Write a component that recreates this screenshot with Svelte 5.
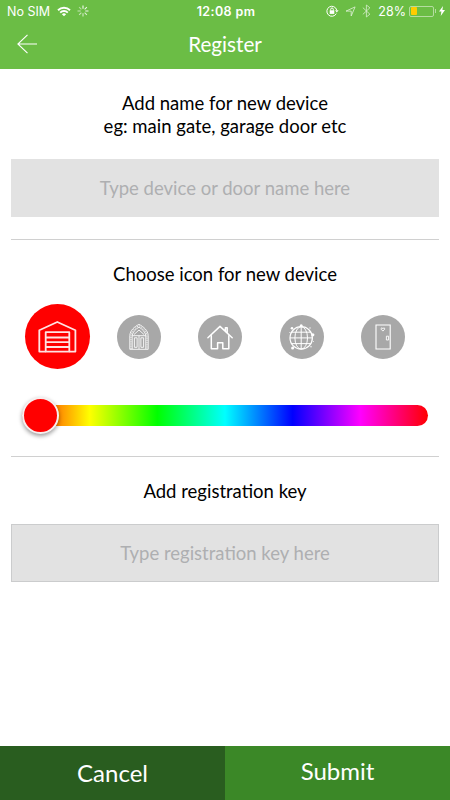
<script lang="ts">
  type DeviceIcon = "garage" | "gate" | "house" | "globe" | "door";

  const icons: DeviceIcon[] = ["garage", "gate", "house", "globe", "door"];
  const spokes = [0, 45, 90, 135, 180, 225, 270, 315];

  let selected: DeviceIcon = $state("garage");
  let deviceName = $state("");
  let registrationKey = $state("");
  let battery = $state(28);
</script>

<div class="screen">
  <header>
    <div class="status-bar">
      <div class="status-left">
        <span>No SIM</span>
        <svg class="wifi" width="14" height="11" viewBox="0 0 14 11" fill="none" stroke="#fff" stroke-width="1.9">
          <path d="M1 4.2a8.6 8.6 0 0 1 12 0M3.2 6.6a5.4 5.4 0 0 1 7.6 0" />
          <path d="M7 10.3L4.9 8.3a3 3 0 0 1 4.2 0z" fill="#fff" stroke="none" />
        </svg>
        <svg width="12" height="12" viewBox="0 0 12 12" stroke="#fff" stroke-width="1.1">
          {#each spokes as angle}
            <path d="M6 3.7V.5" transform="rotate({angle} 6 6)" opacity={0.95 - angle / 700} />
          {/each}
        </svg>
      </div>
      <span class="clock">12:08 pm</span>
      <div class="status-right">
        <svg width="13" height="12" viewBox="0 0 13 12" fill="none" stroke="#fff">
          <path d="M10.3 8.6A5 5 0 1 1 10.7 5" />
          <path d="M9 5.2h3.6l-1.8 2.3z" fill="#fff" stroke="none" />
          <rect x="3.7" y="5.3" width="4.6" height="3.6" fill="#fff" stroke="none" />
          <path d="M4.7 5.5V4.3a1.3 1.3 0 0 1 2.6 0v1.2" />
        </svg>
        <svg class="location" width="11" height="11" viewBox="0 0 11 11" fill="none" stroke="#fff" stroke-width=".8">
          <path d="M10.1.9L6.2 10V5.1H1z" />
        </svg>
        <svg class="bluetooth" width="9" height="14" viewBox="0 0 9 14" fill="none" stroke="#fff" stroke-width=".8">
          <path d="M.8 3.6l7.1 6.6L4.4 13V1l3.5 2.8-7.1 6.6" />
        </svg>
        <span class="percent">{battery}%</span>
        <div class="battery"><div class="level" style="width: {battery}%"></div></div>
        <div class="battery-cap"></div>
        <svg class="bolt" width="6" height="10" viewBox="0 0 6 9" preserveAspectRatio="none" fill="#fff">
          <path d="M4 0L0 5h2.4L1.7 9 6 3.7H3.4z" />
        </svg>
      </div>
    </div>
    <div class="title-bar">
      <button class="back" aria-label="Back">
        <svg width="20" height="20" viewBox="0 0 20 20" fill="none" stroke="#fff" stroke-width="1.1">
          <path d="M10.5.8L.9 10l9.6 9.2M.9 10H20" />
        </svg>
      </button>
      <h1>Register</h1>
    </div>
  </header>

  <main>
    <section class="name-section">
      <p>Add name for new device<br />eg: main gate, garage door etc</p>
      <input bind:value={deviceName} placeholder="Type device or door name here" />
    </section>

    <section class="icon-section">
      <p>Choose icon for new device</p>
      <div class="icons">
        {#each icons as icon}
          <button
            class="icon"
            class:selected={selected === icon}
            aria-label={icon}
            onclick={() => (selected = icon)}
          >
            <svg viewBox={icon === "garage" ? "0 0 65 65" : "0 0 44 44"} fill="none" stroke="#fff">
              {#if icon === "garage"}
                <g stroke="#ffe3e3" stroke-width="1.8" stroke-linejoin="round">
                  <path d="M20.7 47.6h-6.4V26.2L32.3 18l18.1 8.2v21.4h-6.1" />
                  <path d="M20.7 47.6V28.2h23.6v19.4zM20.7 33.5h23.6M20.7 38.2h23.6M20.7 43h23.6" />
                </g>
              {:else if icon === "gate"}
                <g stroke-width="1" stroke="#f4f4f4">
                  <path d="M12.8 34.3V20.5c.3-5 4.6-8.9 9.2-11.1 4.6 2.2 8.9 6.1 9.2 11.1v13.8z" />
                  <path d="M15.2 34V20.8c.4-4 3.6-6.7 6.8-8.7 3.2 2 6.4 4.7 6.8 8.7V34" />
                  <path d="M14 34V20.7c.3-4.5 4-7.8 8-10 4 2.2 7.7 5.5 8 10V34" stroke-dasharray="1.2 1" />
                  <path d="M15 20.7h14M22 20.7V34M17.4 32.3v-9.5h2.7v9.5zM23.9 32.3v-9.5h2.7v9.5zM17 19.5l5-4.5 5 4.5" />
                </g>
              {:else if icon === "house"}
                <g stroke-width="1.5" stroke-linecap="round" stroke-linejoin="round">
                  <path d="M9.9 22.8L22 11.4l12.2 11.4M27.4 16v-3.3h1.8v5.2" />
                  <path d="M13.3 20.8v12.9h6.3v-5.9h5.2v5.9h6V20.8" />
                </g>
              {:else if icon === "globe"}
                <circle cx="21.2" cy="22.9" r="11.2" stroke-width="1.2" />
                <ellipse cx="21.2" cy="22.9" rx="6.3" ry="11.2" />
                <path d="M21.2 11.7v22.4M10 22.9h22.4M12 17.2h18.4M12 28.6h18.4" />
                <g fill="#fff" stroke="none">
                  <circle cx="12" cy="13.3" r="1.3" />
                  <circle cx="21.2" cy="10.8" r="1.5" />
                  <circle cx="32.8" cy="19.8" r="1.6" />
                  <circle cx="12.6" cy="32.9" r="1.5" />
                  <circle cx="30" cy="13" r=".7" />
                  <circle cx="31" cy="31.7" r=".7" />
                  <circle cx="9.9" cy="17.5" r=".6" />
                  <circle cx="33.4" cy="26.6" r=".5" />
                </g>
              {:else}
                <path d="M15 10h14.2v24H15z" stroke-width="1.1" />
                <path d="M25.4 21.2h2.2v3.8h-2.2z" stroke-width=".9" />
                <path d="M21.9 16.1l-1.8-1.9c-.3-1.6 1.3-1.8 1.8-.5.5-1.3 2.1-1.1 1.8.5z" stroke-width=".9" />
              {/if}
            </svg>
          </button>
        {/each}
      </div>
      <div class="hue-track"><div class="thumb"></div></div>
    </section>

    <section class="key-section">
      <p>Add registration key</p>
      <input class="outlined" bind:value={registrationKey} placeholder="Type registration key here" />
    </section>
  </main>

  <footer>
    <button class="cancel">Cancel</button>
    <button class="submit">Submit</button>
  </footer>
</div>

<style>
  :global(body) {
    margin: 0;
  }

  .screen {
    display: flex;
    flex-direction: column;
    width: 450px;
    height: 800px;
    background: #fff;
    color: #000;
    font-family: Lato, sans-serif;
    font-size: 18.5px;
  }

  button {
    border: 0;
    padding: 0;
    font-family: inherit;
    cursor: pointer;
  }

  svg {
    display: block;
    flex-shrink: 0;
  }

  header {
    height: 69px;
    background: #6bbd45;
    color: #fff;
  }

  .status-bar {
    display: grid;
    grid-template-columns: 1fr auto 1fr;
    align-items: center;
    height: 22px;
    padding: 0 5px 0 7px;
    font-family: Inter, sans-serif;
    font-size: 12.5px;
  }

  .status-left,
  .status-right {
    display: flex;
    align-items: center;
  }

  .status-left {
    gap: 6.5px;
  }

  .status-right {
    justify-content: flex-end;
  }

  .clock {
    font-weight: 600;
    letter-spacing: 0.4px;
  }

  .location {
    margin-left: 6px;
    opacity: 0.8;
  }

  .bluetooth {
    margin: 0 7px 0 6px;
    opacity: 0.75;
  }

  .battery {
    box-sizing: border-box;
    width: 25px;
    height: 11px;
    margin-left: 3px;
    padding: 0.5px;
    border: 1px solid #b4dda0;
    border-radius: 2px;
  }

  .battery-cap {
    width: 1px;
    height: 4px;
    margin-left: 1px;
    background: #b4dda0;
  }

  .level {
    height: 100%;
    background: #fc0;
    border-radius: 1px;
  }

  .bolt {
    margin-left: 3px;
  }

  .title-bar {
    display: grid;
    grid-template-columns: 60px 1fr 60px;
    align-items: center;
    height: 44px;
  }

  .back {
    padding-left: 17px;
    background: none;
  }

  h1 {
    margin: 0;
    font-size: 20.7px;
    font-weight: 400;
    text-align: center;
  }

  main {
    flex: 1;
    padding: 0 11px;
  }

  section {
    box-sizing: border-box;
  }

  .name-section {
    height: 171px;
    padding-top: 23px;
    border-bottom: 1px solid #d0d0d0;
  }

  .icon-section {
    height: 217px;
    padding-top: 23px;
    border-bottom: 1px solid #d0d0d0;
  }

  .key-section {
    padding-top: 23px;
  }

  p {
    margin: 0;
    line-height: 23px;
    text-align: center;
  }

  input {
    box-sizing: border-box;
    display: block;
    width: 100%;
    height: 58px;
    margin-top: 21px;
    padding: 0 0 1px;
    border: 0;
    border-radius: 0;
    background: #e2e2e2;
    font: inherit;
    text-align: center;
  }

  input::placeholder {
    color: #aeafb1;
    opacity: 1;
  }

  input.outlined {
    border: 1px solid #cbcccd;
  }

  .icons {
    display: flex;
    align-items: center;
    gap: 37.5px;
    height: 65px;
    margin-top: 18px;
    padding-left: 14px;
  }

  .icon {
    width: 44px;
    height: 44px;
    border-radius: 50%;
    background: #a8a8a8;
  }

  .icon.selected {
    width: 65px;
    height: 65px;
    margin-right: -11px;
    background: #f00;
  }

  .hue-track {
    display: flex;
    align-items: center;
    height: 21px;
    margin: 36px 11px 0;
    border-radius: 11px;
    background: linear-gradient(to right, #f00, #ff0, #0f0, #0ff, #00f, #f0f, #f00);
  }

  .thumb {
    box-sizing: border-box;
    width: 37px;
    height: 37px;
    border: 2px solid #f7eeee;
    border-radius: 50%;
    background: #f00;
    box-shadow: 0 2px 4px rgba(0, 0, 0, 0.4);
  }

  footer {
    display: flex;
    height: 54px;
  }

  footer button {
    flex: 1;
    color: #fff;
    font-size: 24px;
  }

  .cancel {
    padding-bottom: 1px;
    background: #295d1f;
  }

  .submit {
    padding-bottom: 6px;
    background: #3b8827;
  }
</style>
